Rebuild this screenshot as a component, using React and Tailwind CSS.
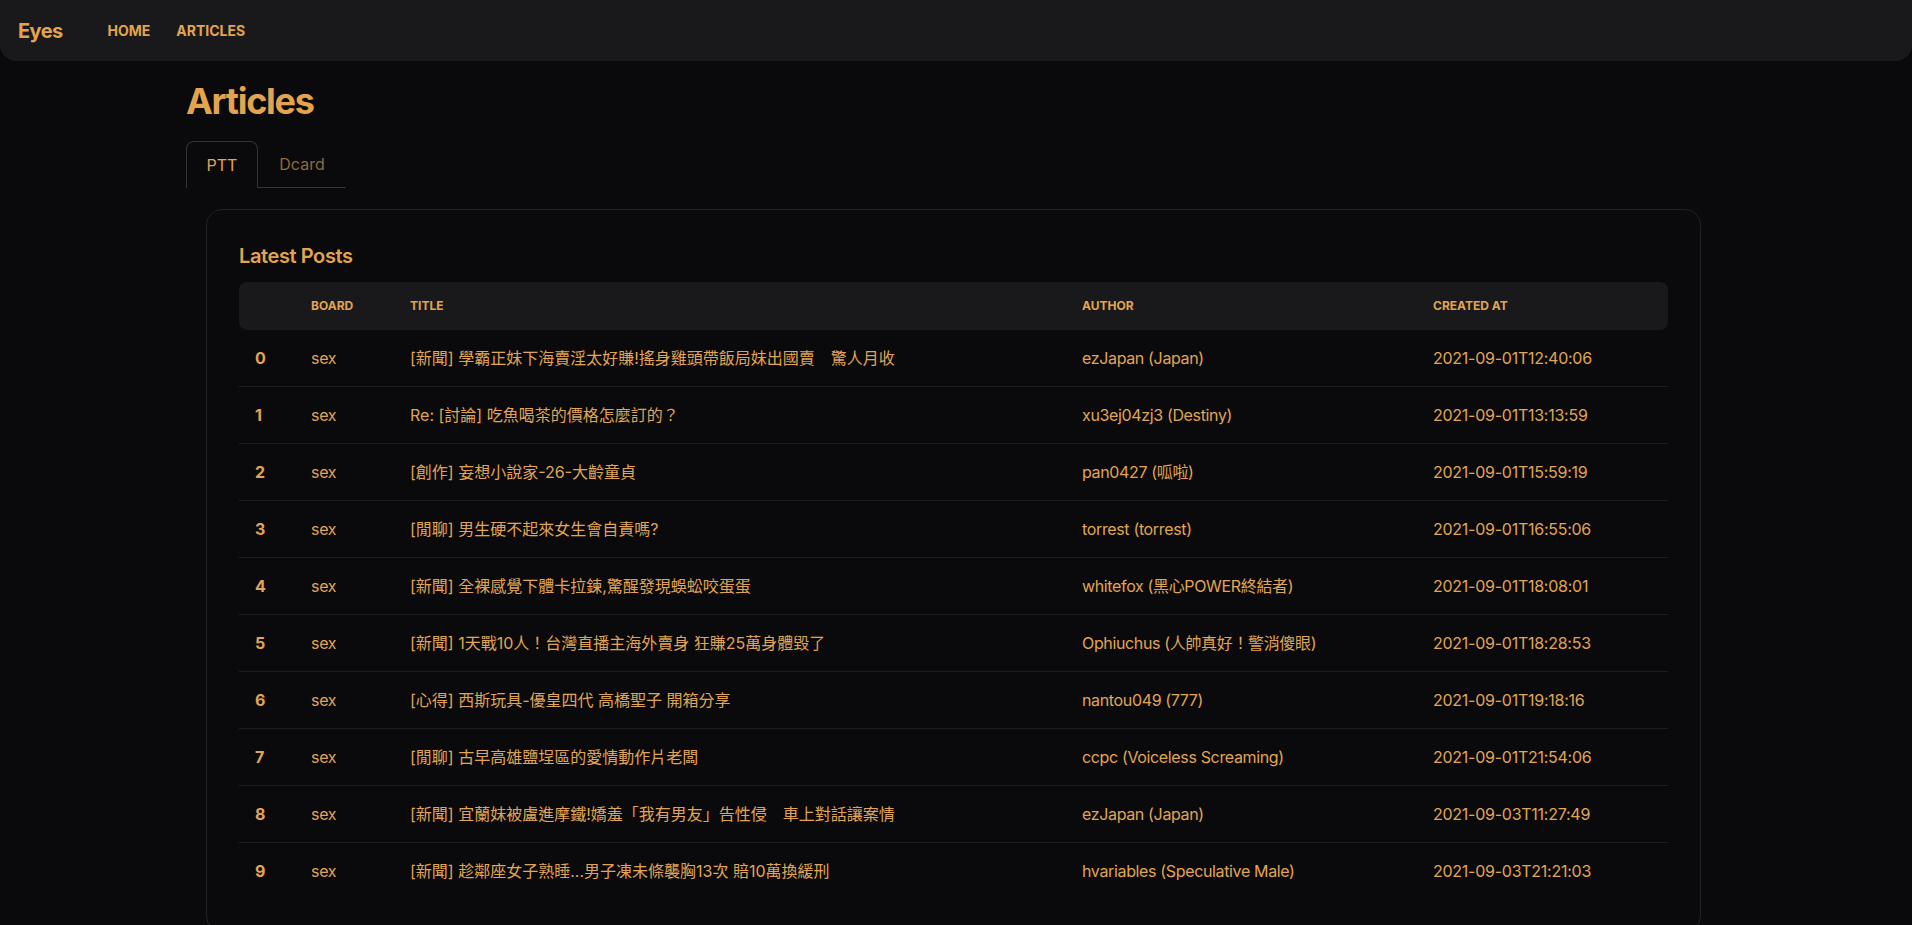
import React from "react";

const rows = [
  ["0", "sex", "[新聞] 學霸正妹下海賣淫太好賺!搖身雞頭帶飯局妹出國賣　驚人月收", "ezJapan (Japan)", "2021-09-01T12:40:06"],
  ["1", "sex", "Re: [討論] 吃魚喝茶的價格怎麼訂的？", "xu3ej04zj3 (Destiny)", "2021-09-01T13:13:59"],
  ["2", "sex", "[創作] 妄想小說家-26-大齡童貞", "pan0427 (呱啦)", "2021-09-01T15:59:19"],
  ["3", "sex", "[閒聊] 男生硬不起來女生會自責嗎?", "torrest (torrest)", "2021-09-01T16:55:06"],
  ["4", "sex", "[新聞] 全裸感覺下體卡拉鍊,驚醒發現蜈蚣咬蛋蛋", "whitefox (黑心POWER終結者)", "2021-09-01T18:08:01"],
  ["5", "sex", "[新聞] 1天戰10人！台灣直播主海外賣身 狂賺25萬身體毀了", "Ophiuchus (人帥真好！警消傻眼)", "2021-09-01T18:28:53"],
  ["6", "sex", "[心得] 西斯玩具-優皇四代 高橋聖子 開箱分享", "nantou049 (777)", "2021-09-01T19:18:16"],
  ["7", "sex", "[閒聊] 古早高雄鹽埕區的愛情動作片老闆", "ccpc (Voiceless Screaming)", "2021-09-01T21:54:06"],
  ["8", "sex", "[新聞] 宜蘭妹被盧進摩鐵!嬌羞「我有男友」告性侵　車上對話讓案情", "ezJapan (Japan)", "2021-09-03T11:27:49"],
  ["9", "sex", "[新聞] 趁鄰座女子熟睡...男子凍未條襲胸13次 賠10萬換緩刑", "hvariables (Speculative Male)", "2021-09-03T21:21:03"],
];

export default function App() {
  return (
    <div
      className="min-h-screen bg-[#0a0a0c] text-[#e0a555]"
      style={{ fontFamily: 'Inter, "Noto Sans CJK TC", "Noto Sans", sans-serif' }}
    >
      <nav className="h-[61px] w-full bg-[#19191c] rounded-b-2xl flex items-center">
        <span className="ml-[18px] text-[20px] font-bold tracking-[-0.03em] text-[#e3a44e]">Eyes</span>
        <div className="ml-[45px] flex items-center gap-[26px] text-[14px] font-bold text-[#e3a44e]">
          <span>HOME</span>
          <span>ARTICLES</span>
        </div>
      </nav>

      <main className="pl-[186px] pt-[20px]">
        <h1 className="text-[36px] leading-[40px] font-bold tracking-[-0.035em] text-[#e3a44e]">Articles</h1>

        <div className="mt-[20px] flex items-end">
          <div className="h-[47px] w-[72px] flex items-center justify-center border border-b-0 border-[#333336] rounded-t-lg text-[16px] text-[#e2a550]">
            PTT
          </div>
          <div className="h-[47px] w-[88px] flex items-center justify-center border-b border-[#333336] text-[16px] text-[#8d6b3c]">
            Dcard
          </div>
        </div>

        <div className="mt-[21px] ml-[20px] w-[1495px] border border-[#222226] rounded-2xl p-8">
          <h2 className="text-[20px] leading-[28px] font-semibold tracking-[-0.02em] text-[#e3a44e] mb-3">Latest Posts</h2>
          <table className="w-[1429px] table-fixed border-collapse text-left">
            <colgroup>
              <col className="w-[56px]" />
              <col className="w-[99px]" />
              <col className="w-[672px]" />
              <col className="w-[351px]" />
              <col className="w-[251px]" />
            </colgroup>
            <thead>
              <tr className="text-[12px] leading-[16px] font-bold uppercase text-[#e3a44e]">
                <th className="bg-[#19191c] rounded-l-lg px-4 py-4"></th>
                <th className="bg-[#19191c] px-4 py-4">Board</th>
                <th className="bg-[#19191c] px-4 py-4">Title</th>
                <th className="bg-[#19191c] px-4 py-4">Author</th>
                <th className="bg-[#19191c] rounded-r-lg px-4 py-4">Created At</th>
              </tr>
            </thead>
            <tbody className="text-[16px] leading-[24px]">
              {rows.map((r, i) => (
                <tr key={r[0]} className={i < rows.length - 1 ? "border-b border-[#1e1e22]" : ""}>
                  <td className="px-4 py-4 font-bold whitespace-nowrap">{r[0]}</td>
                  <td className="px-4 py-4 whitespace-nowrap tracking-[-0.02em]">{r[1]}</td>
                  <td className="px-4 py-4 whitespace-nowrap">{r[2]}</td>
                  <td className="px-4 py-4 whitespace-nowrap tracking-[-0.022em]">{r[3]}</td>
                  <td className="px-4 py-4 whitespace-nowrap tracking-[-0.016em]">{r[4]}</td>
                </tr>
              ))}
            </tbody>
          </table>
        </div>
      </main>
    </div>
  );
}
